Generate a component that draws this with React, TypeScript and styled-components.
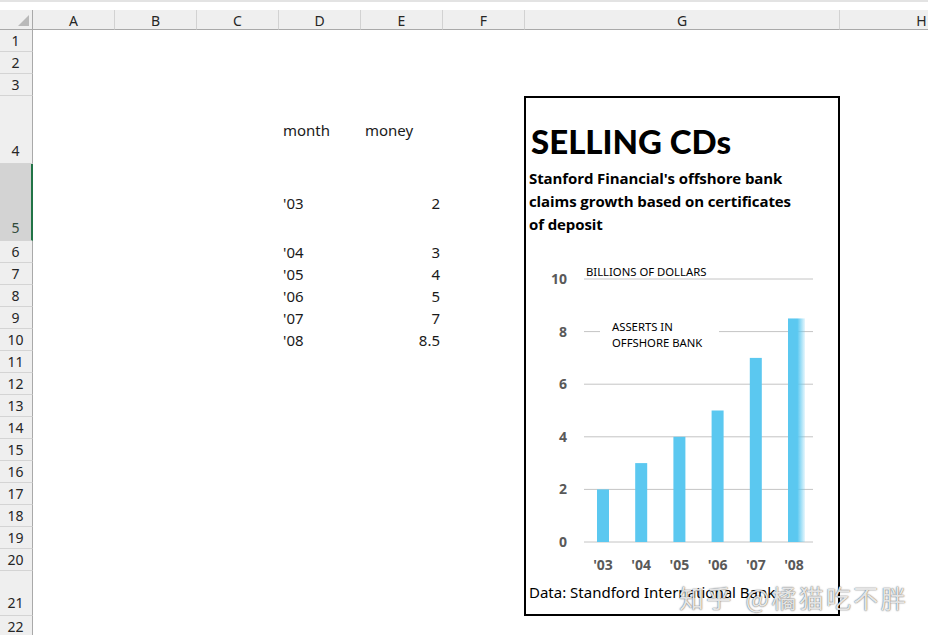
import styled, { createGlobalStyle } from "styled-components";

const GlobalStyle = createGlobalStyle`
  html, body {
    margin: 0;
    padding: 0;
    background: #fff;
    overflow: hidden;
  }
  body {
    width: 928px;
    height: 635px;
    font-family: "Noto Sans", "Open Sans", sans-serif;
  }
`;

const columns = ["A", "B", "C", "D", "E", "F", "G", "H"];

const rowHeights = [
  22, 22, 22, 68, 77, 22, 22, 22, 22, 22, 22, 22, 22, 22, 22, 22, 22, 22, 22,
  22, 45, 22,
];

const table: [string, string][] = [
  ["'03", "2"],
  ["'04", "3"],
  ["'05", "4"],
  ["'06", "5"],
  ["'07", "7"],
  ["'08", "8.5"],
];

const bars = [
  { label: "'03", value: 2 },
  { label: "'04", value: 3 },
  { label: "'05", value: 4 },
  { label: "'06", value: 5 },
  { label: "'07", value: 7 },
  { label: "'08", value: 8.5 },
];

// plot geometry, svg space
const zeroY = 291;
const unit = 26.3;
const yOf = (v: number) => zeroY - v * unit;

const App = () => {
  return (
    <Page>
      <GlobalStyle />
      <TopStrip />
      <Sheet>
        <Corner>
          <CornerMark />
        </Corner>
        {columns.map((c, i) => (
          <ColHeader key={c} $col={i + 2}>
            {c}
          </ColHeader>
        ))}

        {rowHeights.map((h, i) => (
          <RowHeader key={i} $row={i + 2} $selected={i === 4} $tall={h > 22}>
            {i + 1}
          </RowHeader>
        ))}

        <Cell $row={5} $col={5}>
          month
        </Cell>
        <Cell $row={5} $col={6}>
          money
        </Cell>
        {table.map(([m, v], i) => (
          <>
            <Cell key={"m" + i} $row={6 + i} $col={5}>
              {m}
            </Cell>
            <Cell key={"v" + i} $row={6 + i} $col={6} $right>
              {v}
            </Cell>
          </>
        ))}

        <ChartBox>
          <ChartTitle>SELLING CDs</ChartTitle>
          <ChartSubtitle>
            Stanford Financial's offshore bank
            <br />
            claims growth based on certificates
            <br />
            of deposit
          </ChartSubtitle>
          <Plot width="312" height="328" viewBox="0 0 312 328">
            <defs>
              <linearGradient id="fade" x1="0" x2="1" y1="0" y2="0">
                <stop offset="0" stopColor="#5bc8f0" />
                <stop offset="0.55" stopColor="#5bc8f0" />
                <stop offset="1" stopColor="#5bc8f0" stopOpacity="0.15" />
              </linearGradient>
            </defs>
            {[0, 2, 4, 6, 10].map((v) => (
              <line
                key={v}
                x1={58}
                x2={287}
                y1={yOf(v)}
                y2={yOf(v)}
                stroke="#c4c4c4"
                strokeWidth={1}
              />
            ))}
            <line x1={58} x2={74} y1={yOf(8)} y2={yOf(8)} stroke="#c4c4c4" />
            <line x1={193} x2={287} y1={yOf(8)} y2={yOf(8)} stroke="#c4c4c4" />

            {[0, 2, 4, 6, 8, 10].map((v) => (
              <AxisText key={v} x={41} y={yOf(v) + 5} textAnchor="end">
                {v}
              </AxisText>
            ))}

            {bars.map((b, i) => {
              const cx = 77 + i * 38.2;
              return (
                <g key={b.label}>
                  <rect
                    x={cx - 6}
                    y={yOf(b.value)}
                    width={i === 5 ? 17 : 12}
                    height={zeroY - yOf(b.value)}
                    fill={i === 5 ? "url(#fade)" : "#5bc8f0"}
                  />
                  <AxisText x={cx} y={319} textAnchor="middle">
                    {b.label}
                  </AxisText>
                </g>
              );
            })}

            <NoteText x={60} y={25}>
              BILLIONS OF DOLLARS
            </NoteText>
            <NoteText x={86} y={80}>
              ASSERTS IN
            </NoteText>
            <NoteText x={86} y={96}>
              OFFSHORE BANK
            </NoteText>
          </Plot>
          <ChartSource>Data: Standford International Bank</ChartSource>
        </ChartBox>
      </Sheet>
      <Watermark>知乎 @橘猫吃不胖</Watermark>
    </Page>
  );
};

export default App;

const Page = styled.div`
  position: relative;
  width: 928px;
  height: 635px;
  overflow: hidden;
`;

const TopStrip = styled.div`
  height: 10px;
  border-top: 2px solid #e3e3e3;
  box-sizing: border-box;
`;

const Sheet = styled.div`
  display: grid;
  grid-template-columns: 33px repeat(6, 82px) 315px 164px;
  grid-template-rows: 20px ${rowHeights.map((h) => h + "px").join(" ")};
`;

const Corner = styled.div`
  grid-row: 1;
  grid-column: 1;
  background: #efefef;
  border-right: 1px solid #a9a9a9;
  border-bottom: 1px solid #a9a9a9;
  box-sizing: border-box;
  position: relative;
`;

const CornerMark = styled.div`
  position: absolute;
  right: 3px;
  bottom: 3px;
  width: 0;
  height: 0;
  border-left: 11px solid transparent;
  border-bottom: 11px solid #b9b9b9;
`;

const ColHeader = styled.div<{ $col: number }>`
  grid-row: 1;
  grid-column: ${(p) => p.$col};
  background: #efefef;
  border-right: 1px solid #d2d2d2;
  border-bottom: 1px solid #a9a9a9;
  box-sizing: border-box;
  display: flex;
  align-items: center;
  justify-content: center;
  font-size: 14px;
  color: #262626;
  padding-top: 1px;
`;

const RowHeader = styled.div<{
  $row: number;
  $selected?: boolean;
  $tall?: boolean;
}>`
  grid-column: 1;
  grid-row: ${(p) => p.$row};
  background: ${(p) => (p.$selected ? "#d3d3d3" : "#efefef")};
  border-bottom: 1px solid #d4d4d4;
  border-right: ${(p) =>
    p.$selected ? "2px solid #217346" : "1px solid #a9a9a9"};
  box-sizing: border-box;
  display: flex;
  align-items: flex-end;
  justify-content: center;
  padding-bottom: ${(p) => (p.$tall ? "3px" : "1px")};
  padding-right: ${(p) => (p.$selected ? "0" : "1px")};
  font-size: 14px;
  line-height: 19px;
  color: ${(p) => (p.$selected ? "#2f4a3a" : "#262626")};
`;

const Cell = styled.div<{ $row: number; $col: number; $right?: boolean }>`
  grid-row: ${(p) => p.$row};
  grid-column: ${(p) => p.$col};
  display: flex;
  align-items: center;
  justify-content: ${(p) => (p.$right ? "flex-end" : "flex-start")};
  padding: 0 3px 0 4px;
  font-size: 15px;
  color: #1a1a1a;
`;

const ChartBox = styled.div`
  grid-column: 8;
  grid-row: 5 / 23;
  margin-left: -1px;
  border: 2px solid #000;
  background: #fff;
  display: flex;
  flex-direction: column;
  position: relative;
  z-index: 1;
`;

const ChartTitle = styled.div`
  margin-top: 24px;
  padding-left: 5px;
  font-family: Lato, "Open Sans", sans-serif;
  font-weight: 900;
  font-size: 33px;
  line-height: 38px;
  color: #000;
`;

const ChartSubtitle = styled.div`
  margin-top: 7px;
  padding-left: 3px;
  font-family: "Open Sans", sans-serif;
  font-weight: 700;
  font-size: 15px;
  line-height: 23px;
  letter-spacing: -0.1px;
  color: #000;
`;

const Plot = styled.svg`
  display: block;
  margin-top: 15px;
`;

const AxisText = styled.text`
  font-family: "Open Sans", sans-serif;
  font-weight: 700;
  font-size: 14px;
  fill: #595959;
`;

const NoteText = styled.text`
  font-family: "Noto Sans", sans-serif;
  font-size: 11.3px;
  fill: #000;
`;

const ChartSource = styled.div`
  margin-top: 3px;
  padding-left: 3px;
  font-family: "Noto Sans", sans-serif;
  font-size: 15px;
  line-height: 20px;
  color: #000;
`;

const Watermark = styled.div`
  position: absolute;
  left: 679px;
  top: 580px;
  font-family: "Noto Sans CJK SC", sans-serif;
  font-size: 25px;
  line-height: 34px;
  letter-spacing: 2.3px;
  word-spacing: 4px;
  color: rgba(255, 255, 255, 0.85);
  text-shadow: 0 0 1px rgba(0, 0, 0, 0.6), 0 0 2px rgba(0, 0, 0, 0.35);
  z-index: 2;
  white-space: nowrap;
`;
